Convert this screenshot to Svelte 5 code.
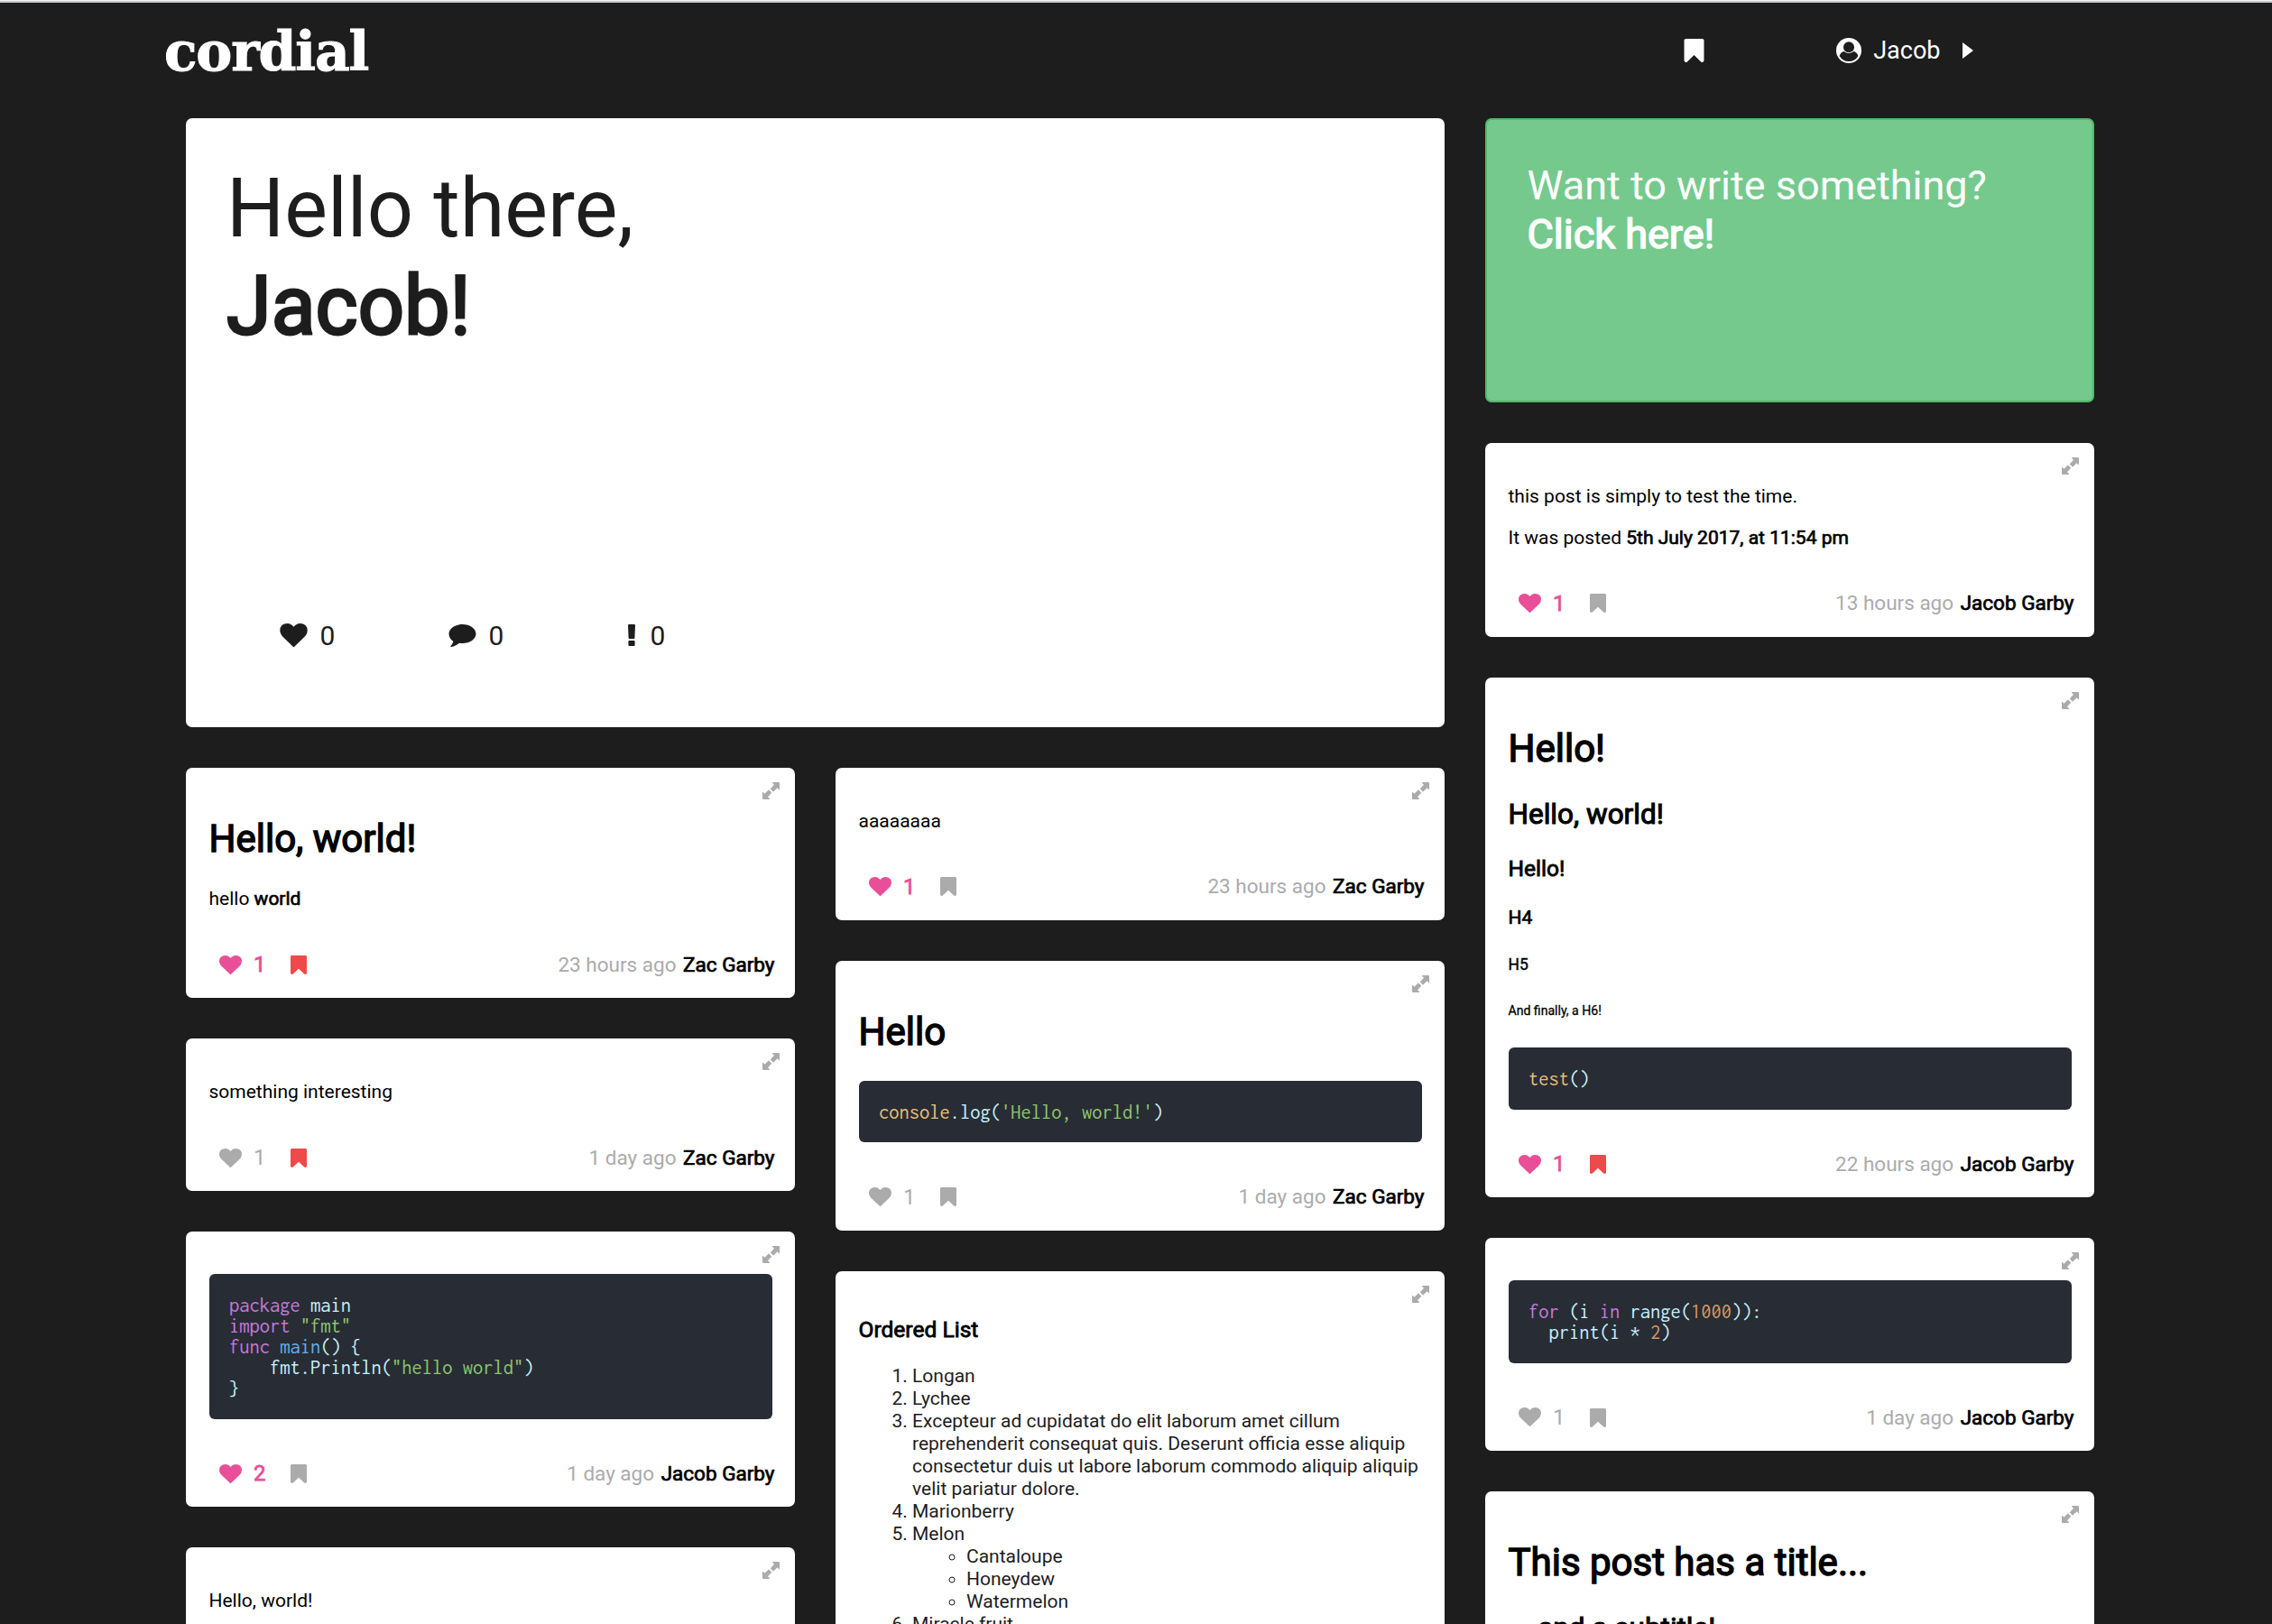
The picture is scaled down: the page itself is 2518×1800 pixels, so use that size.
<script>
  const heart = 'M896 1664q-26 0-44-18l-624-602q-10-8-27.500-26T145 952.500 77 855 23.500 734 0 596q0-220 127-344t351-124q62 0 126.500 21.500t120 58T820 276t76 68q36-36 76-68t95.500-68.500 120-58T1314 128q224 0 351 124t127 344q0 221-229 450l-623 600q-18 18-44 18z';
  const bookmark = 'M1164 128q23 0 44 9 33 13 52.500 41t19.500 62v1289q0 34-19.500 62t-52.500 41q-19 8-44 8-48 0-83-32l-441-424-441 424q-36 33-83 33-23 0-44-9-33-13-52.500-41T0 1529V240q0-34 19.500-62T72 137q21-9 44-9h1048z';

  const left = [
    { kind: 'hello', likes: 1, liked: true, marked: true, time: '23 hours ago', author: 'Zac Garby' },
    { kind: 'text', text: 'something interesting', likes: 1, liked: false, marked: true, time: '1 day ago', author: 'Zac Garby' },
    { kind: 'code', code: [
        [['k', 'package'], ['', ' main']],
        [['k', 'import'], ['', ' '], ['s', '"fmt"']],
        [['k', 'func'], ['', ' '], ['f', 'main'], ['', '() {']],
        [['', '    fmt.Println('], ['s', '"hello world"'], ['', ')']],
        [['', '}']]
      ], likes: 2, liked: true, marked: false, time: '1 day ago', author: 'Jacob Garby' },
    { kind: 'text', text: 'Hello, world!' }
  ];
  const middle = [
    { kind: 'text', text: 'aaaaaaaa', likes: 1, liked: true, marked: false, time: '23 hours ago', author: 'Zac Garby' },
    { kind: 'code', title: 'Hello', code: [
        [['b', 'console'], ['', '.log('], ['s', "'Hello, world!'"], ['', ')']]
      ], likes: 1, liked: false, marked: false, time: '1 day ago', author: 'Zac Garby' },
    { kind: 'list' }
  ];
  const right = [
    { kind: 'time', likes: 1, liked: true, marked: false, time: '13 hours ago', author: 'Jacob Garby' },
    { kind: 'headings', code: [[['b', 'test'], ['', '()']]], likes: 1, liked: true, marked: true, time: '22 hours ago', author: 'Jacob Garby' },
    { kind: 'code', code: [
        [['k', 'for'], ['', ' (i '], ['k', 'in'], ['', ' range('], ['n', '1000'], ['', ')):']],
        [['', '  print(i * '], ['n', '2'], ['', ')']]
      ], likes: 1, liked: false, marked: false, time: '1 day ago', author: 'Jacob Garby' },
    { kind: 'titled' }
  ];
</script>

{#snippet codeBlock(lines)}
  <pre>{#each lines as line}<span class="line">{#each line as [type, text]}<span class="tok {type}">{text}</span>{/each}</span>{/each}</pre>
{/snippet}

{#snippet card(post)}
  <article class="card post">
    <svg class="expand" viewBox="0 0 19 19"><path d="M11.500 0H18q1 0 1 1v6.500q0 1-.8.4L16.600 6.300 12 10.800Q11.500 11.300 11 10.800L8.600 8.400Q8.100 7.900 8.600 7.400L13 2.700 11.200 1Q10.600 0 11.500 0zM7.500 19H1q-1 0-1-1v-6.500q0-1 .8-.4l1.600 1.600L7 8.200q.5-.5 1 0l2.400 2.400q.5.5 0 1L6 16.300 7.800 18q.6 1-.3 1z" /><path class="split" d="M5.500 5.500l8 8" /></svg>
    <div class="body">
      {#if post.kind === 'hello'}
        <h1>Hello, world!</h1>
        <p>hello <strong>world</strong></p>
      {:else if post.kind === 'text'}
        <p>{post.text}</p>
      {:else if post.kind === 'time'}
        <p>this post is simply to test the time.</p>
        <p>It was posted <strong>5th July 2017, at 11:54 pm</strong></p>
      {:else if post.kind === 'headings'}
        <h1>Hello!</h1>
        <h2>Hello, world!</h2>
        <h3>Hello!</h3>
        <h4>H4</h4>
        <h5>H5</h5>
        <h6>And finally, a H6!</h6>
        {@render codeBlock(post.code)}
      {:else if post.kind === 'code'}
        {#if post.title}<h1>{post.title}</h1>{/if}
        {@render codeBlock(post.code)}
      {:else if post.kind === 'titled'}
        <h1>This post has a title...</h1>
        <h2>... and a subtitle!</h2>
      {:else}
        <h3>Ordered List</h3>
        <ol>
          <li>Longan</li>
          <li>Lychee</li>
          <li>Excepteur ad cupidatat do elit laborum amet cillum reprehenderit consequat quis. Deserunt officia esse aliquip consectetur duis ut labore laborum commodo aliquip aliquip velit pariatur dolore.</li>
          <li>Marionberry</li>
          <li>Melon
            <ul>
              <li>Cantaloupe</li>
              <li>Honeydew</li>
              <li>Watermelon</li>
            </ul>
          </li>
          <li>Miracle fruit</li>
        </ol>
      {/if}
    </div>
    {#if post.author}
      <footer>
        <span class="likes" class:liked={post.liked}>
          <svg class="heart" viewBox="0 128 1792 1536" preserveAspectRatio="none"><path d={heart} /></svg>
          <span class="count">{post.likes}</span>
        </span>
        <svg class="mark" class:marked={post.marked} viewBox="0 128 1280 1516" preserveAspectRatio="none"><path d={bookmark} /></svg>
        <span class="meta">{post.time} <strong>{post.author}</strong></span>
      </footer>
    {/if}
  </article>
{/snippet}

<div class="page">
  <header>
    <div class="logo">cordial</div>
    <nav>
      <svg class="nav-mark" viewBox="0 128 1280 1516"><path d={bookmark} /></svg>
      <div class="user">
        <svg class="avatar" viewBox="0 0 28 28">
          <circle cx="14" cy="14" r="14" />
          <circle class="cut" cx="14" cy="10.200" r="6" />
          <path class="cut" d="M3.600 20q1.500-4.700 5.200-5a7.800 7.800 0 0 0 10.400 0q3.700.3 5.200 5A12 12 0 0 1 3.600 20z" />
        </svg>
        <span>Jacob</span>
        <svg class="caret" viewBox="0 0 12 18"><path d="M0 0l12 9-12 9z" /></svg>
      </div>
    </nav>
  </header>

  <main>
    <div class="wide">
      <section class="card hero">
        <div class="greeting">Hello there,<br /><span class="bold">Jacob!</span></div>
        <div class="stats">
          <div class="stat first">
            <svg class="s-heart" viewBox="0 128 1792 1536"><path d={heart} /></svg><span>0</span>
          </div>
          <div class="stat second">
            <svg class="s-comment" viewBox="0 0 30 25"><path d="M15 0c8.300 0 15 4.700 15 10.500S23.300 21 15 21c-1.200 0-2.400-.1-3.500-.3-2.700 2.400-5.700 3.800-9 4.300-.6 0-.9-.6-.5-1 1.400-1.500 2.500-3 2.800-5.200C1.900 16.900 0 13.900 0 10.500 0 4.700 6.700 0 15 0z" /></svg><span>0</span>
          </div>
          <div class="stat third">
            <svg class="s-bang" viewBox="0 0 8 24"><path d="M1 0h6q1 0 1 1l-.6 14q0 1-1 1H1.600q-1 0-1-1L0 1q0-1 1-1zM1.400 18h5.200q1 0 1 1v4q0 1-1 1H1.400q-1 0-1-1v-4q0-1 1-1z" /></svg><span>0</span>
          </div>
        </div>
      </section>
      <div class="pair">
        <div class="column">{#each left as post}{@render card(post)}{/each}</div>
        <div class="column">{#each middle as post}{@render card(post)}{/each}</div>
      </div>
    </div>
    <div class="column">
      <section class="card write">Want to write something?<br /><span class="bold">Click here!</span></section>
      {#each right as post}{@render card(post)}{/each}
    </div>
  </main>
</div>

<style>
  :global(body) { margin: 0; background: #1d1d1d; overflow: hidden; }
  .page {
    box-sizing: border-box;
    height: 1800px;
    overflow: hidden;
    background: #1d1d1d;
    border-top: 1px solid #f1f3f4;
    box-shadow: inset 0 2px 0 #c8cacc;
    font-family: Roboto, "Liberation Sans", sans-serif;
    color: #000;
  }
  svg { display: block; fill: currentColor; flex: none; }

  header { display: flex; justify-content: space-between; align-items: center; height: 110px; padding: 0 331px 0 182px; color: #fff; }
  .logo { padding-top: 1px; font: 700 60px/70px "DejaVu Serif", serif; letter-spacing: -1.2px; -webkit-text-stroke: 1px currentColor; }
  nav { display: flex; align-items: center; }
  .nav-mark { width: 23px; height: 26px; margin-right: 146px; }
  .user { display: flex; align-items: center; font-size: 27px; }
  .user span { margin: 0 24.5px 0 13.5px; }
  .avatar { width: 28px; height: 28px; }
  .cut { fill: #1d1d1d; }
  .caret { width: 12px; height: 18px; }

  main { display: flex; gap: 45px; padding: 20px 0 0 206px; }
  .wide { display: flex; flex-direction: column; gap: 45px; width: 1395px; }
  .pair { display: flex; gap: 45px; }
  .column { display: flex; flex-direction: column; gap: 45px; width: 675px; }
  .card { box-sizing: border-box; border-radius: 7px; background: #fff; }

  .hero { display: flex; flex-direction: column; justify-content: space-between; height: 675px; padding: 46.5px 45px 82px; color: #1d1d1d; }
  .greeting { font-size: 90px; line-height: 1.2; }
  .bold, strong { font-weight: 400; -webkit-text-stroke: 0.033em currentColor; }
  .stats { display: flex; height: 40px; font-size: 30px; line-height: 41px; padding-left: 59px; }
  .stat { display: flex; align-items: center; gap: 13.5px; }
  .first { width: 187px; }
  .second { width: 199px; }
  .third { gap: 16.5px; }
  .s-heart { width: 31px; height: 26px; }
  .s-comment { width: 31px; height: 25px; }
  .s-bang { width: 8px; height: 24px; }

  .write { height: 315px; padding: 46px 45px 44px 44.5px; border: 2px solid #50b86c; background: #75c98d; color: #fff; font-size: 45px; line-height: 1.2; }

  .post { position: relative; display: flex; flex-direction: column; min-height: 169px; font-size: 21px; line-height: 1.2; }
  .expand { position: absolute; top: 16px; right: 17.5px; width: 19px; height: 19px; color: #ababab; }
  .split { fill: none; stroke: #fff; stroke-width: 1.8; }
  .body { padding: 26px 25.5px 0; }
  .body::after { content: ''; display: table; }
  p { margin: 21px 0; line-height: 24.8px; }
  h1, h2, h3, h4, h5, h6 { font-weight: 400; -webkit-text-stroke: 0.034em currentColor; }
  h1 { font-size: 2em; line-height: 1.21; margin: 0.67em 0; }
  h2 { font-size: 1.5em; margin: 0.83em 0; }
  h3 { font-size: 1.17em; margin: 1em 0; }
  h4 { font-size: 1em; margin: 1.33em 0; }
  h5 { font-size: 0.83em; margin: 1.64em 0; -webkit-text-stroke-width: 0.025em; }
  h6 { font-size: 0.67em; margin: 2.3em 0; -webkit-text-stroke-width: 0.02em; }
  ol { margin: 21px 0; padding-left: 59.5px; line-height: 25px; color: #1d1d1d; }
  ul { margin: 0; padding-left: 60px; list-style: circle; }
  pre {
    margin: 21.3px 0;
    padding: 22.5px;
    border-radius: 6px;
    background: #282c34;
    color: #c5f0fb;
    font-family: Inconsolata, "Noto Sans Mono CJK SC", "Liberation Mono", monospace;
    font-size: 22.5px;
    line-height: 23.1px;
  }
  .line { display: block; }
  .k { color: #c678dd; }
  .s { color: #8cc570; }
  .f { color: #61afef; }
  .b { color: #e5c07b; }
  .n { color: #d19a66; }

  footer { display: flex; align-items: center; height: 34px; padding: 22.2px 22.5px 20px 37px; font-size: 22.5px; color: #ababab; }
  .likes { display: flex; align-items: center; width: 79px; font-size: 24px; }
  .heart { width: 25px; height: 21px; margin-right: 13px; }
  .count { padding-top: 1px; }
  .liked { color: #e84f98; }
  .liked .count { -webkit-text-stroke: 0.033em currentColor; }
  .mark { width: 18px; height: 21px; }
  .marked { color: #ed4a4a; }
  .meta { margin-left: auto; }
  .meta strong { color: #000; margin-left: 2px; }
</style>
